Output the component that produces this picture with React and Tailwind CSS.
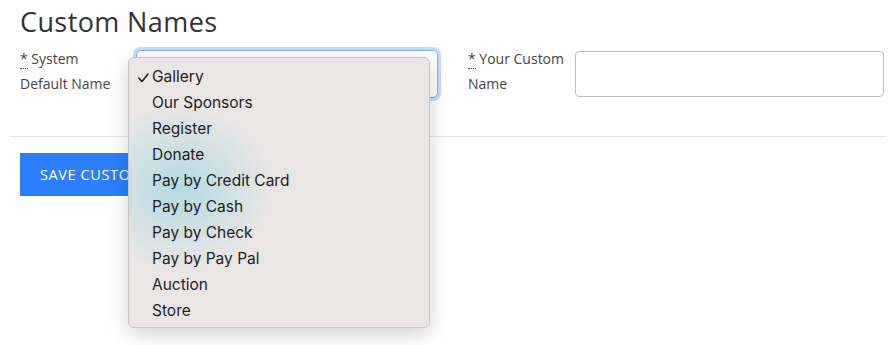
export default function App() {
  const options = [
    "Gallery",
    "Our Sponsors",
    "Register",
    "Donate",
    "Pay by Credit Card",
    "Pay by Cash",
    "Pay by Check",
    "Pay by Pay Pal",
    "Auction",
    "Store",
  ];

  return (
    <div className="relative w-[896px] h-[345px] bg-white overflow-hidden px-[10px] text-[#333]" style={{ fontFamily: "'Open Sans', 'Noto Sans', sans-serif" }}>
      <h2 className="px-[10px] pt-[4px] text-[27px] leading-[36px] text-[#333] tracking-[0.4px]">Custom Names</h2>

      <div className="flex items-start pl-[10px] pr-[2px] mt-[10px]">
        <label className="shrink-0 w-[116px] -mt-[4px] text-[14px] leading-[25px] text-[#444]">
          <abbr className="no-underline border-b border-dotted border-[#444]" title="required">*</abbr> System
          <br />
          Default Name
        </label>
        <div className="shrink-0 relative w-[302px] h-[48px] rounded-[5px] border border-[#7fb0f5] shadow-[0_0_0_3px_#c3dbfd] bg-white">
          <span className="absolute right-[6px] top-[16px] text-[12px] text-[#333]">⌄</span>
        </div>
        <label className="shrink-0 ml-[30px] w-[107px] -mt-[4px] text-[14px] leading-[25px] text-[#444]">
          <abbr className="no-underline border-b border-dotted border-[#444]" title="required">*</abbr> Your Custom
          <br />
          Name
        </label>
        <input className="shrink-0 w-[309px] h-[46px] mt-[1px] rounded-[4px] border border-[#bdbdbd] bg-white" />
      </div>

      <div className="mt-[38px] border-t border-[#e2e2e2]" />

      <div className="px-[10px] pt-[16px]">
        <button className="h-[43px] px-[20px] bg-[#2b7fff] text-white text-[14.5px] tracking-[0.6px]">
          SAVE CUSTOM NAMES
        </button>
      </div>

      {/* native select popup */}
      <div className="absolute left-[128px] top-[57px] w-[302px] h-[271px] rounded-[6px] border border-[#c9c4c4] bg-[#ebe6e6] shadow-[0_6px_20px_rgba(0,0,0,0.18)] overflow-hidden">
        <div className="absolute left-[-45px] top-[45px] w-[190px] h-[170px] rounded-full bg-[radial-gradient(closest-side,rgba(160,215,222,0.75),rgba(235,230,230,0))]" />
        <ul className="relative pt-[6px]" style={{ fontFamily: "Inter, 'Noto Sans', sans-serif" }}>
          {options.map((o, i) => (
            <li key={o} className="relative h-[26px] pl-[23px] text-[15.5px] leading-[26px] text-[#222]">
              {i === 0 && (
                <svg className="absolute left-[9px] top-[9px]" width="11" height="10" viewBox="0 0 11 10" fill="none">
                  <path d="M1 5.2 L4 8.5 L10 1" stroke="#222" strokeWidth="1.6" strokeLinecap="round" strokeLinejoin="round" />
                </svg>
              )}
              {o}
            </li>
          ))}
        </ul>
      </div>
    </div>
  );
}
